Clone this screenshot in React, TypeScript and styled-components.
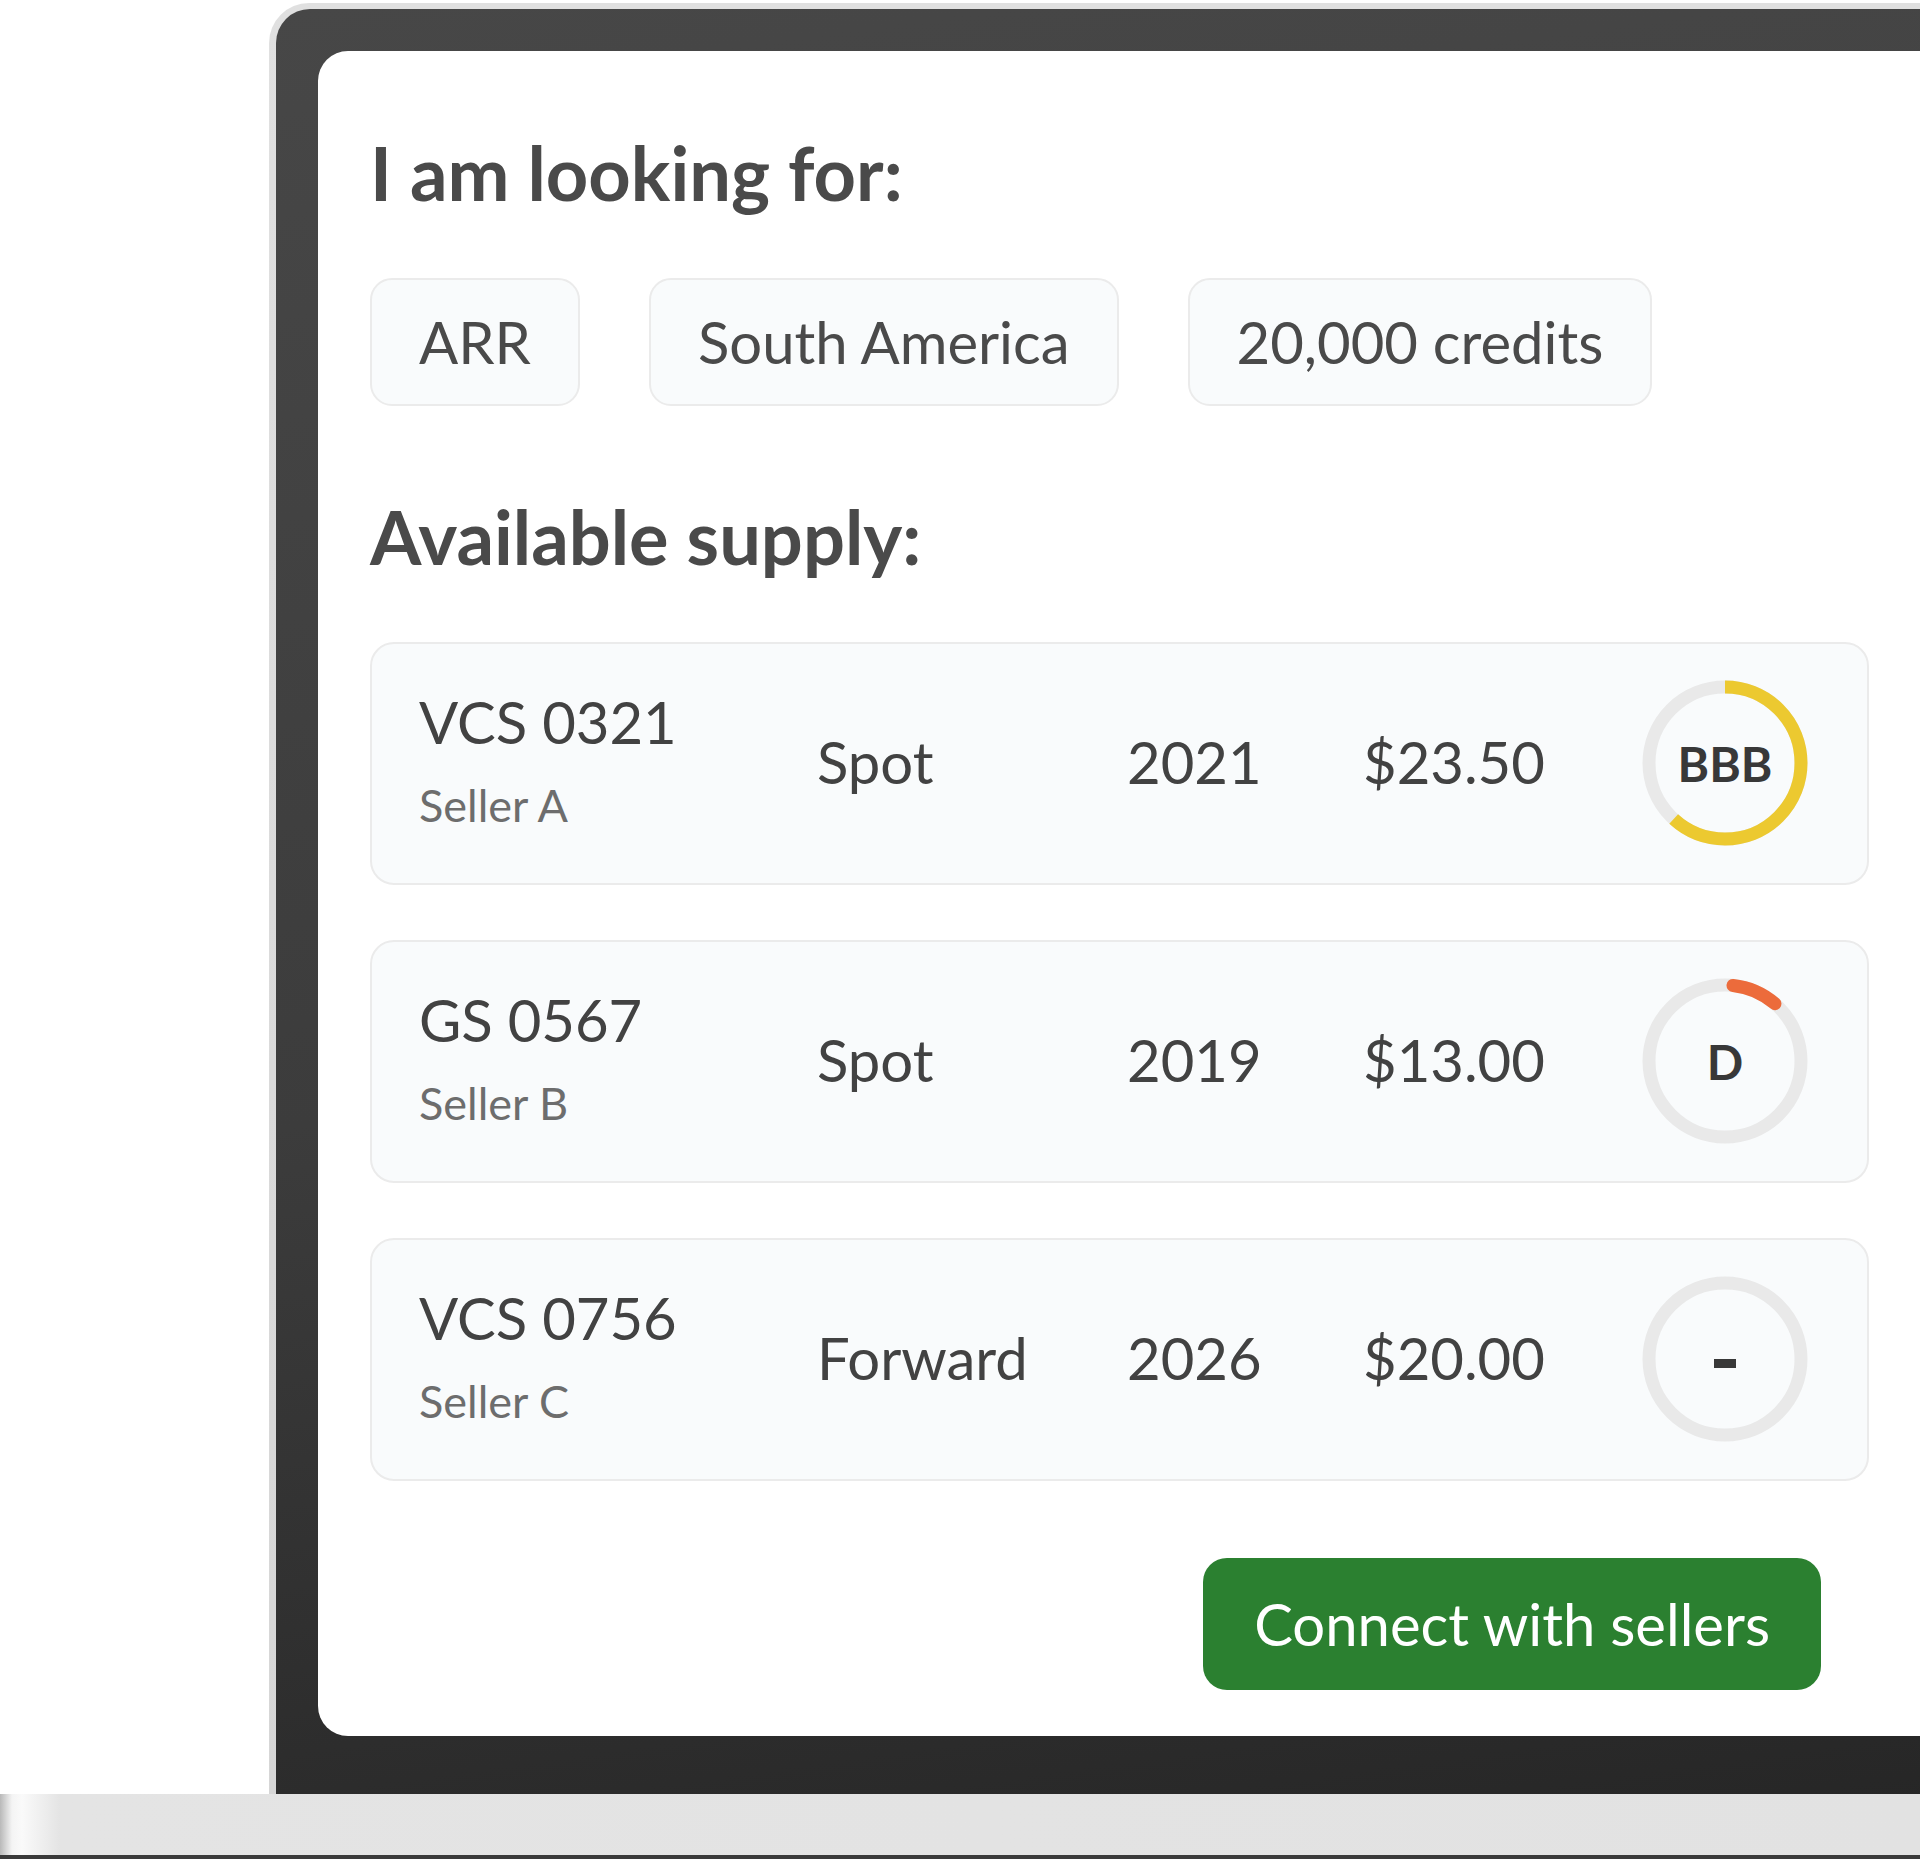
import styled, { createGlobalStyle } from "styled-components";

const GlobalStyle = createGlobalStyle`
  html, body {
    margin: 0;
    padding: 0;
    background: #ffffff;
  }
  body {
    font-family: "Lato", "Noto Sans", sans-serif;
    overflow: hidden;
  }
`;

const Page = styled.div`
  width: 1920px;
  height: 1859px;
  overflow: hidden;
  display: flex;
  flex-direction: column;
  background: #ffffff;
`;

const LidArea = styled.div`
  display: flex;
  padding: 3px 0 0 269px;
`;

const Lid = styled.div`
  flex: none;
  width: 1800px;
  padding: 6px 0 0 7px;
  border-radius: 40px 0 0 0;
  background: linear-gradient(to bottom, #e0e0e0, #d6d6d6);
`;

const Bezel = styled.div`
  padding: 42px 0 58px 42px;
  border-radius: 34px 0 0 0;
  background: linear-gradient(172deg, #474747 0%, #3c3c3c 55%, #262626 100%);
`;

const Screen = styled.div`
  display: flex;
  flex-direction: column;
  padding: 77px 0 46px 52px;
  border-radius: 30px 0 0 30px;
  background: #ffffff;
`;

const Heading = styled.h2`
  margin: 0;
  font-size: 74px;
  line-height: 90px;
  font-weight: 700;
  color: #4a4a4a;
`;

const ChipRow = styled.div`
  display: flex;
  gap: 69px;
  margin: 60px 0 86px;
`;

const Chip = styled.div`
  padding: 27px 47px;
  border: 2px solid #ebebeb;
  border-radius: 22px;
  background: #f9fbfc;
  font-size: 58px;
  line-height: 1.2;
  color: #4a4a4a;
`;

const SupplyList = styled.div`
  display: flex;
  flex-direction: column;
  gap: 55px;
  width: 1499px;
  margin-top: 60px;
`;

const SupplyRow = styled.div`
  display: grid;
  grid-template-columns: 398px 310px 236px 279px 166px;
  align-items: center;
  height: 243px;
  box-sizing: border-box;
  padding: 0 59px 0 47px;
  border: 2px solid #ebebeb;
  border-radius: 24px;
  background: #f9fbfc;
`;

const NameCell = styled.div`
  display: flex;
  flex-direction: column;
  gap: 22px;
  margin-top: -4px;
`;

const Cell = styled.div`
  font-size: 58px;
  line-height: 1.2;
  color: #424242;
  margin-top: -3px;
`;

const Seller = styled.div`
  font-size: 45px;
  line-height: 1.2;
  color: #6d6d6d;
`;

const Rating = styled.div`
  position: relative;
  width: 166px;
  height: 166px;
`;

const RatingLabel = styled.span`
  position: absolute;
  inset: 0;
  display: flex;
  align-items: center;
  justify-content: center;
  font-size: 48px;
  font-weight: 700;
  color: #383838;
`;

const Dash = styled.span`
  width: 22px;
  height: 9px;
  margin-top: 8px;
  background: #383838;
`;

const ButtonRow = styled.div`
  display: flex;
  justify-content: flex-end;
  width: 1451px;
  margin-top: 77px;
`;

const ConnectButton = styled.button`
  height: 132px;
  padding: 0 51px;
  border: none;
  border-radius: 24px;
  background: #2b8030;
  font-family: "Lato", sans-serif;
  font-size: 58px;
  color: #ffffff;
`;

const Base = styled.div`
  height: 61px;
  border-bottom: 4px solid #3a3a3a;
  background: linear-gradient(
    to right,
    #b9b9b9 0px,
    #f4f4f4 12px,
    #fafafa 22px,
    #e4e4e4 60px,
    #e2e2e2 100%
  );
`;

const R = 76;
const C = 2 * Math.PI * R;

type Supply = {
  id: string;
  seller: string;
  kind: string;
  year: string;
  price: string;
  grade: string;
  color?: string;
  from?: number;
  to?: number;
  cap?: "round" | "butt";
};

const supply: Supply[] = [
  { id: "VCS 0321", seller: "Seller A", kind: "Spot", year: "2021", price: "$23.50", grade: "BBB", color: "#ecc930", from: 0, to: 0.617, cap: "butt" },
  { id: "GS 0567", seller: "Seller B", kind: "Spot", year: "2019", price: "$13.00", grade: "D", color: "#ec6b3b", from: 0.017, to: 0.114, cap: "round" },
  { id: "VCS 0756", seller: "Seller C", kind: "Forward", year: "2026", price: "$20.00", grade: "-" },
];

function Gauge({ s }: { s: Supply }) {
  const len = s.to !== undefined && s.from !== undefined ? (s.to - s.from) * C : 0;
  return (
    <Rating>
      <svg width="166" height="166" viewBox="0 0 166 166">
        <circle cx="83" cy="83" r={R} fill="none" stroke="#e9e9e9" strokeWidth="13" />
        {s.color && (
          <circle
            cx="83"
            cy="83"
            r={R}
            fill="none"
            stroke={s.color}
            strokeWidth="13"
            strokeLinecap={s.cap}
            strokeDasharray={`${len} ${C}`}
            strokeDashoffset={-(s.from ?? 0) * C}
            transform="rotate(-90 83 83)"
          />
        )}
      </svg>
      <RatingLabel>{s.grade === "-" ? <Dash /> : s.grade}</RatingLabel>
    </Rating>
  );
}

export default function App() {
  return (
    <Page>
      <GlobalStyle />
      <LidArea>
        <Lid>
          <Bezel>
            <Screen>
              <Heading>I am looking for:</Heading>
              <ChipRow>
                <Chip>ARR</Chip>
                <Chip>South America</Chip>
                <Chip>20,000 credits</Chip>
              </ChipRow>
              <Heading>Available supply:</Heading>
              <SupplyList>
                {supply.map((s) => (
                  <SupplyRow key={s.id}>
                    <NameCell>
                      <Cell>{s.id}</Cell>
                      <Seller>{s.seller}</Seller>
                    </NameCell>
                    <Cell>{s.kind}</Cell>
                    <Cell>{s.year}</Cell>
                    <Cell>{s.price}</Cell>
                    <Gauge s={s} />
                  </SupplyRow>
                ))}
              </SupplyList>
              <ButtonRow>
                <ConnectButton>Connect with sellers</ConnectButton>
              </ButtonRow>
            </Screen>
          </Bezel>
        </Lid>
      </LidArea>
      <Base />
    </Page>
  );
}
